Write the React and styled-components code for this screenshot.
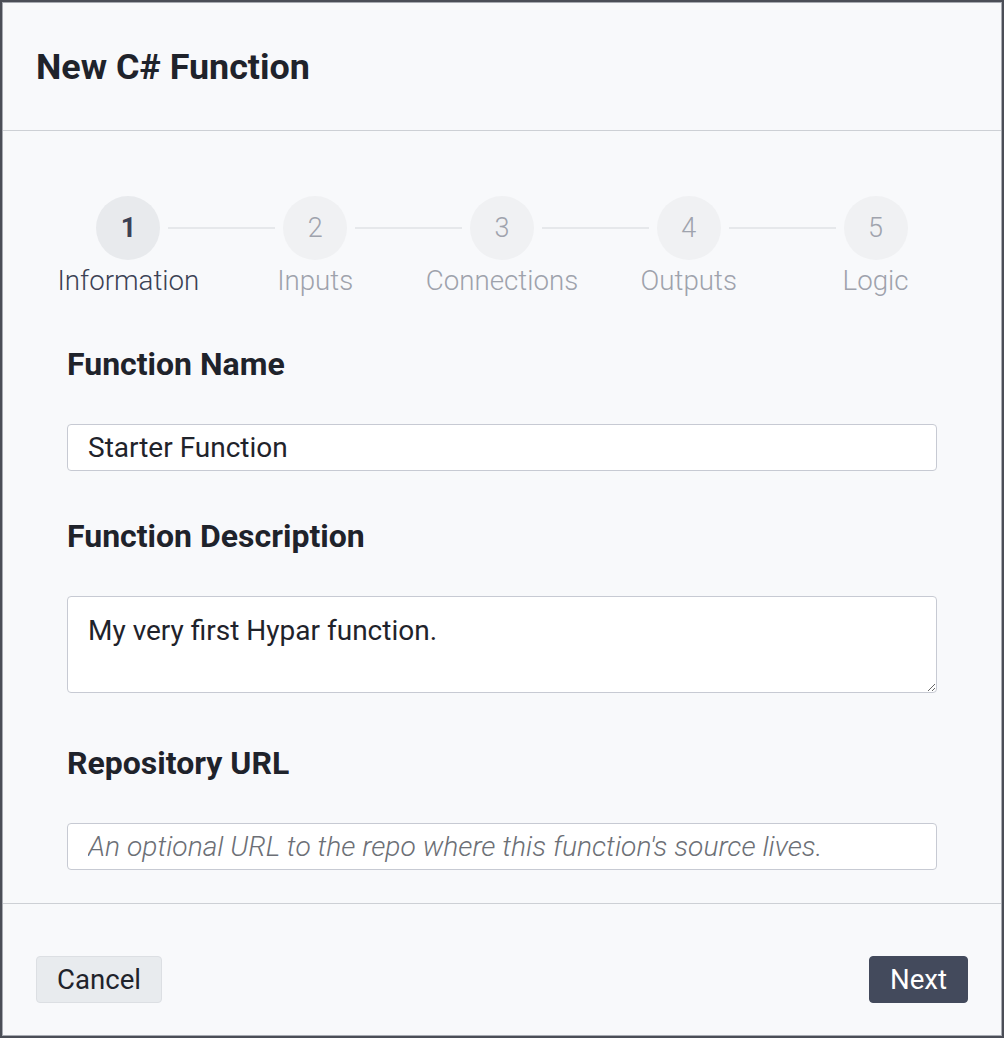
import React from "react";
import styled, { createGlobalStyle } from "styled-components";

const Global = createGlobalStyle`
  * { box-sizing: border-box; }
  html, body { margin: 0; padding: 0; }
  body {
    background: #4b4e57;
    font-family: Roboto, "Noto Sans", "Liberation Sans", sans-serif;
  }
`;

const Frame = styled.div`
  padding: 2px;
  width: 1004px;
  height: 1038px;
`;

const Modal = styled.div`
  width: 1000px;
  height: 1034px;
  background: #f8f9fb;
  border: 1px solid #a7aab1;
  display: flex;
  flex-direction: column;
`;

const Header = styled.div`
  height: 128px;
  display: flex;
  align-items: center;
  padding: 0 33px;
  border-bottom: 1px solid #cdd0d5;
`;

const Title = styled.h1`
  margin: 0;
  font-size: 35.9px;
  font-weight: 700;
  color: #1f232b;
`;

const Body = styled.div`
  flex: 1;
  padding: 65px 32px 0;
  border-bottom: 1px solid #cdd0d5;
`;

const Steps = styled.div`
  display: grid;
  grid-template-columns: repeat(5, 1fr);
`;

const Step = styled.div`
  display: flex;
  flex-direction: column;
  align-items: center;
`;

const StepTop = styled.div`
  display: flex;
  align-items: center;
  width: 100%;
`;

const Connector = styled.div`
  flex: 1;
  height: 2px;
  background: ${(p) => (p.$hidden ? "transparent" : "#e6e8eb")};
  margin: ${(p) => (p.$side === "left" ? "0 8px 0 0" : "0 0 0 8px")};
`;

const Circle = styled.div`
  width: 64px;
  height: 64px;
  border-radius: 50%;
  display: flex;
  align-items: center;
  justify-content: center;
  font-size: 27px;
  background: ${(p) => (p.$active ? "#e8eaed" : "#f0f1f3")};
  color: ${(p) => (p.$active ? "#3b4154" : "#9fa3ad")};
  font-weight: ${(p) => (p.$active ? 700 : 300)};
`;

const StepLabel = styled.div`
  margin-top: 6px;
  font-size: 27.7px;
  line-height: 30px;
  font-weight: 300;
  color: ${(p) => (p.$active ? "#3b4154" : "#9ea2ac")};
`;

const Form = styled.div`
  padding: 51px 32px 0;
  display: flex;
  flex-direction: column;
`;

const Label = styled.label`
  display: block;
  font-size: 32px;
  line-height: 34px;
  font-weight: 700;
  color: #1f232b;
  margin: ${(p) => p.$mt || 0}px 0 43px;
`;

const Input = styled.input`
  width: 100%;
  height: 47px;
  border: 1px solid #c7cad3;
  border-radius: 4px;
  background: #fff;
  padding: 0 20px;
  font-family: inherit;
  font-size: 28px;
  color: #1f232b;
  outline: none;
  &::placeholder {
    font-style: italic;
    font-weight: 300;
    font-size: 28.2px;
    color: #6c6f76;
  }
`;

const TextArea = styled.textarea`
  display: block;
  width: 100%;
  height: 97px;
  border: 1px solid #c7cad3;
  border-radius: 4px;
  background: #fff;
  padding: 18px 20px;
  font-family: inherit;
  font-size: 28px;
  line-height: 32px;
  color: #1f232b;
  outline: none;
  resize: vertical;
`;

const Footer = styled.div`
  height: 131px;
  padding: 20px 33px 0;
  display: flex;
  align-items: center;
  justify-content: space-between;
`;

const Button = styled.button`
  height: 47px;
  padding: 0 20px;
  border-radius: 4px;
  font-family: inherit;
  font-size: 27.6px;
  border: 1px solid ${(p) => (p.$primary ? "#434a5c" : "#dcdfe3")};
  background: ${(p) => (p.$primary ? "#434a5c" : "#e8ebee")};
  color: ${(p) => (p.$primary ? "#ffffff" : "#1f232b")};
  cursor: pointer;
`;

const steps = ["Information", "Inputs", "Connections", "Outputs", "Logic"];

export default function App() {
  return (
    <>
      <Global />
      <Frame>
        <Modal>
          <Header>
            <Title>New C# Function</Title>
          </Header>
          <Body>
            <Steps>
              {steps.map((s, i) => (
                <Step key={s}>
                  <StepTop>
                    <Connector $side="left" $hidden={i === 0} />
                    <Circle $active={i === 0}>{i + 1}</Circle>
                    <Connector $side="right" $hidden={i === steps.length - 1} />
                  </StepTop>
                  <StepLabel $active={i === 0}>{s}</StepLabel>
                </Step>
              ))}
            </Steps>
            <Form>
              <Label>Function Name</Label>
              <Input defaultValue="Starter Function" />
              <Label $mt={48}>Function Description</Label>
              <TextArea defaultValue="My very first Hypar function." />
              <Label $mt={53}>Repository URL</Label>
              <Input placeholder="An optional URL to the repo where this function's source lives." />
            </Form>
          </Body>
          <Footer>
            <Button>Cancel</Button>
            <Button $primary>Next</Button>
          </Footer>
        </Modal>
      </Frame>
    </>
  );
}
